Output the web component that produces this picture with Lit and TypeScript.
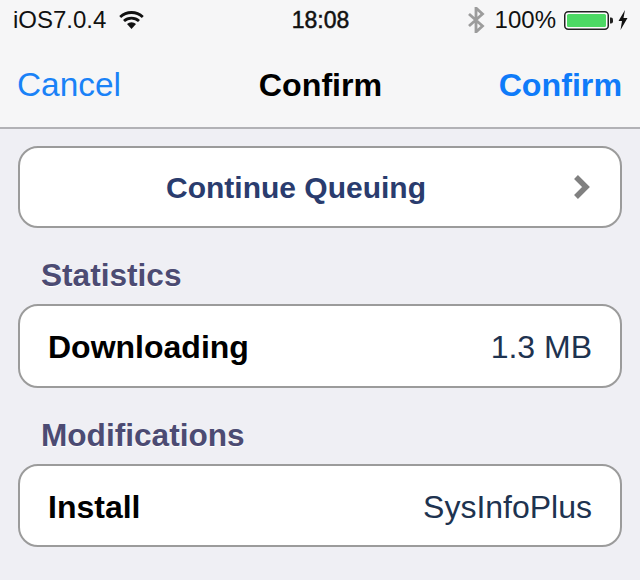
import { LitElement, html, css } from "lit";
import { customElement } from "lit/decorators.js";

@customElement("app-root")
export class AppRoot extends LitElement {
  static styles = css`
    :host {
      display: block;
      width: 640px;
      height: 580px;
      background: #efeff4;
      font-family: "Liberation Sans", Arial, sans-serif;
      overflow: hidden;
    }
    .top {
      background: #f6f6f7;
      border-bottom: 2px solid #b2b2b6;
      height: 127px;
      box-sizing: content-box;
    }
    .status {
      height: 40px;
      display: grid;
      grid-template-columns: 1fr auto 1fr;
      align-items: center;
      font-size: 24px;
      color: #111;
      padding: 0 12px 0 13px;
    }
    .status-left,
    .status-right {
      display: flex;
      align-items: center;
    }
    .status-left {
      gap: 13px;
    }
    .status-right {
      justify-content: flex-end;
    }
    .time {
      font-size: 23px;
      -webkit-text-stroke: 0.5px #111;
    }
    .bt {
      margin-right: 10px;
    }
    .pct {
      margin-right: 8px;
    }
    .bolt {
      margin-left: 5px;
    }
    .nav {
      height: 87px;
      display: grid;
      grid-template-columns: 1fr auto 1fr;
      align-items: center;
      padding: 3px 18px 0 19px;
      font-size: 32.2px;
      box-sizing: border-box;
    }
    .cancel {
      color: #1a82f7;
      font-size: 33.4px;
      margin-left: -2px;
    }
    .title {
      font-weight: 700;
      color: #000;
    }
    .confirm {
      color: #0f7bf9;
      font-weight: 700;
      justify-self: end;
    }
    .content {
      padding: 17px 18px 0;
    }
    .card {
      box-sizing: border-box;
      background: #fff;
      border: 2px solid #9b9b9b;
      border-radius: 20px;
      display: flex;
      align-items: center;
      justify-content: space-between;
      padding: 4px 28px 0 28px;
      height: 83px;
      font-size: 32px;
    }
    .tall {
      height: 84px;
      padding-top: 3px;
    }
    .action {
      position: relative;
      justify-content: center;
      height: 82px;
      padding: 2px 48px 0 0;
      font-size: 30px;
      font-weight: 700;
      color: #2a3c6e;
    }
    .chev {
      position: absolute;
      right: 29px;
      top: 26px;
    }
    .section {
      font-size: 31.6px;
      font-weight: 700;
      color: #4c4b73;
      text-shadow: 0 1px 0 #fff;
      padding-left: 23px;
      line-height: 37px;
    }
    .s1 {
      margin-top: 29px;
      margin-bottom: 10px;
    }
    .s2 {
      margin-top: 29px;
      margin-bottom: 10px;
    }
    .label {
      font-weight: 700;
      color: #000;
    }
    .value {
      color: #1e3350;
    }
  `;

  render() {
    return html`
      <div class="top">
        <div class="status">
          <div class="status-left">
            <span>iOS7.0.4</span>
            <svg width="25" height="18" viewBox="0 0 25 18">
              <path d="M12.5 18 L8 13 A6.5 6.5 0 0 1 17 13 Z" fill="#111" />
              <path d="M5 10 A11 11 0 0 1 20 10" fill="none" stroke="#111" stroke-width="2.8" />
              <path d="M1.2 6 A16.5 16.5 0 0 1 23.8 6" fill="none" stroke="#111" stroke-width="2.8" />
            </svg>
          </div>
          <span class="time">18:08</span>
          <div class="status-right">
            <svg class="bt" width="18" height="26" viewBox="0 0 18 26">
              <path d="M2 7 L15.5 19 L9 25 V1 L15.5 7 L2 19" fill="none" stroke="#9c9c9c" stroke-width="2.8" />
            </svg>
            <span class="pct">100%</span>
            <svg width="49" height="19" viewBox="0 0 49 19">
              <rect x="0.75" y="0.75" width="43.5" height="17.5" rx="3.5" fill="#fff" stroke="#222" stroke-width="1.5" />
              <rect x="3" y="3" width="39" height="13" rx="1.5" fill="#4cd964" />
              <path d="M46 6.5 h1 a2 2 0 0 1 2 2 v2 a2 2 0 0 1 -2 2 h-1 Z" fill="#222" />
            </svg>
            <svg class="bolt" width="10" height="20" viewBox="0 0 10 20">
              <path d="M7 0 L0.5 11 H4 L2.5 20 L9.5 8 H5.5 Z" fill="#111" />
            </svg>
          </div>
        </div>
        <div class="nav">
          <span class="cancel">Cancel</span>
          <span class="title">Confirm</span>
          <span class="confirm">Confirm</span>
        </div>
      </div>
      <div class="content">
        <div class="card action">
          Continue Queuing
          <svg class="chev" width="18" height="26" viewBox="0 0 18 26">
            <path d="M3 3 L13 13 L3 23" fill="none" stroke="#808080" stroke-width="5.5" />
          </svg>
        </div>
        <div class="section s1">Statistics</div>
        <div class="card tall">
          <span class="label">Downloading</span>
          <span class="value">1.3 MB</span>
        </div>
        <div class="section s2">Modifications</div>
        <div class="card">
          <span class="label">Install</span>
          <span class="value">SysInfoPlus</span>
        </div>
      </div>
    `;
  }
}
